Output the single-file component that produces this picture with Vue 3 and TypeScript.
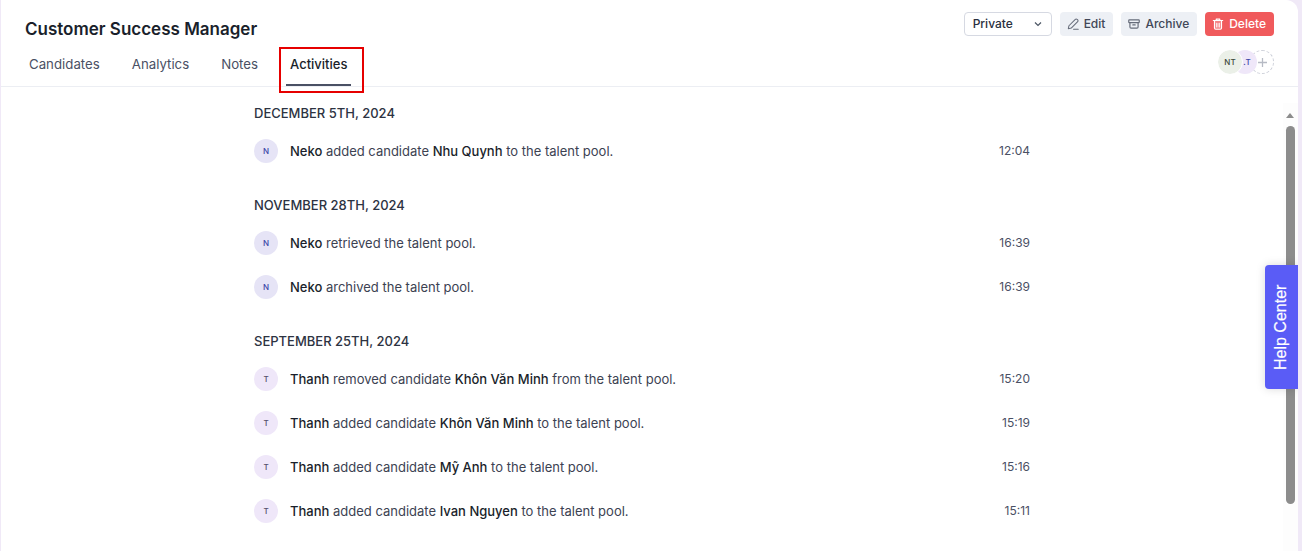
<template>
  <div class="page">
    <div class="panel">
      <header class="head">
        <div class="head__top">
          <h1 class="head__title">Customer Success Manager</h1>
          <div class="head__actions">
            <div class="select">
              <span>Private</span>
              <svg width="10" height="10" viewBox="0 0 10 10" fill="none" stroke="#4b5563" stroke-width="1.2"><path d="M2 3.5 5 6.5 8 3.5" /></svg>
            </div>
            <button class="btn">
              <svg class="btn__icon" width="14" height="14" viewBox="0 0 24 24" fill="none" stroke="currentColor" stroke-width="1.8" stroke-linecap="round" stroke-linejoin="round"><path d="M4 20l1-5L16 4a2.1 2.1 0 0 1 3 0l1 1a2.1 2.1 0 0 1 0 3L9 19z" /><path d="M13 21h8" /></svg>
              <span>Edit</span>
            </button>
            <button class="btn">
              <svg class="btn__icon" width="14" height="14" viewBox="0 0 24 24" fill="none" stroke="currentColor" stroke-width="2" stroke-linecap="round" stroke-linejoin="round"><rect x="3" y="5" width="18" height="4.5" rx="1" /><path d="M5 9.5V17a2 2 0 0 0 2 2h10a2 2 0 0 0 2-2V9.5" /><path d="M10 13.5h4" /></svg>
              <span>Archive</span>
            </button>
            <button class="btn btn--danger">
              <svg width="14" height="14" viewBox="0 0 24 24" fill="none" stroke="currentColor" stroke-width="2" stroke-linecap="round" stroke-linejoin="round"><path d="M4 6h16" /><path d="M9 6V3.5h6V6" /><path d="M6 6v13a2 2 0 0 0 2 2h8a2 2 0 0 0 2-2V6" fill="currentColor" fill-opacity=".25" /><path d="M10 11v6M14 11v6" /></svg>
              <span>Delete</span>
            </button>
          </div>
        </div>
        <div class="head__bottom">
          <nav class="tabs">
            <a v-for="t in tabs" :key="t" class="tab" :class="{ 'tab--on': t === 'Activities' }">{{ t }}</a>
          </nav>
          <div class="members">
            <span class="member member--green">NT</span>
            <span class="member member--purple">.T</span>
            <span class="member member--add">
              <svg width="9" height="9" viewBox="0 0 10 10" stroke="#b6bac4" stroke-width="1.4"><path d="M5 0v10M0 5h10" /></svg>
            </span>
          </div>
        </div>
      </header>

      <div class="body">
        <main class="feed">
          <section v-for="g in groups" :key="g.date" class="group">
            <h2 class="group__date">{{ g.date }}</h2>
            <div v-for="(r, i) in g.rows" :key="i" class="row">
              <span class="avatar" :class="r.who === 'Neko' ? 'avatar--n' : 'avatar--t'">{{ r.who[0] }}</span>
              <p class="row__text">
                <b>{{ r.who }}</b> {{ r.verb }}
                <template v-if="r.name"><b>{{ r.name }}</b> {{ r.tail }}</template>
              </p>
              <span class="row__time">{{ r.time }}</span>
            </div>
          </section>
        </main>
        <div class="scroll">
          <span class="scroll__arrow"></span>
          <span class="scroll__thumb"></span>
        </div>
      </div>

      <div class="help">Help Center</div>
    </div>
  </div>
</template>

<script setup lang="ts">
interface Row {
  who: string
  verb: string
  name?: string
  tail?: string
  time: string
}

const tabs = ['Candidates', 'Analytics', 'Notes', 'Activities']

const groups: { date: string; rows: Row[] }[] = [
  {
    date: 'DECEMBER 5TH, 2024',
    rows: [{ who: 'Neko', verb: 'added candidate', name: 'Nhu Quynh', tail: 'to the talent pool.', time: '12:04' }]
  },
  {
    date: 'NOVEMBER 28TH, 2024',
    rows: [
      { who: 'Neko', verb: 'retrieved the talent pool.', time: '16:39' },
      { who: 'Neko', verb: 'archived the talent pool.', time: '16:39' }
    ]
  },
  {
    date: 'SEPTEMBER 25TH, 2024',
    rows: [
      { who: 'Thanh', verb: 'removed candidate', name: 'Khôn Văn Minh', tail: 'from the talent pool.', time: '15:20' },
      { who: 'Thanh', verb: 'added candidate', name: 'Khôn Văn Minh', tail: 'to the talent pool.', time: '15:19' },
      { who: 'Thanh', verb: 'added candidate', name: 'Mỹ Anh', tail: 'to the talent pool.', time: '15:16' },
      { who: 'Thanh', verb: 'added candidate', name: 'Ivan Nguyen', tail: 'to the talent pool.', time: '15:11' }
    ]
  }
]
</script>

<style>
html, body { margin: 0; height: 100%; overflow: hidden; background: #f0e9f7; }
</style>

<style scoped>
.page { height: 551px; padding: 0 4px 0 1px; box-sizing: border-box; font-family: Inter, "Liberation Sans", sans-serif; color: #1f2430; }
.panel { position: relative; height: 100%; background: #fff; border-top-right-radius: 12px; overflow: hidden; display: flex; flex-direction: column; }

.head { padding: 12px 24px 0 24px; border-bottom: 1px solid #eceef3; height: 74px; flex: none; box-sizing: content-box; }
.head__top { display: flex; justify-content: space-between; align-items: flex-start; height: 24px; }
.head__title { margin: 6px 0 0; font-size: 17px; line-height: 22px; font-weight: 600; color: #1a1f2b; }
.head__actions { display: flex; align-items: center; gap: 8px; }
.select { width: 88px; height: 24px; box-sizing: border-box; border: 1px solid #d6d9e2; border-radius: 4px; display: flex; align-items: center; justify-content: space-between; padding: 0 8px 1px; font-size: 12px; font-weight: 500; color: #2a3040; }
.btn { height: 24px; border: 0; border-radius: 4px; background: #edf0f5; color: #414757; display: flex; align-items: center; gap: 4px; padding: 0 8px 0 6px; font: 500 12px Inter, "Liberation Sans", sans-serif; }
.btn span { margin-bottom: 1px; }
.btn__icon { color: #666c7a; }
.btn--danger { background: #f05a5c; color: #fff; }

.head__bottom { display: flex; justify-content: space-between; align-items: flex-start; margin-top: 4px; }
.tabs { display: flex; }
.tab { display: block; padding: 16px 4px 14px; margin-right: 24px; font-size: 13.25px; line-height: 16px; color: #4a5064; }
.tab--on { color: #1a1f2b; font-weight: 500; font-size: 13px; position: relative; }
.tab--on::after { content: ""; position: absolute; left: 0; right: 0; bottom: 0; height: 2px; background: #4a5064; }
.tab--on::before { content: ""; position: absolute; left: -7px; right: -13px; top: 7px; bottom: -7px; border: 2px solid #e60000; }

.members { display: flex; margin-top: 10px; }
.member { width: 24px; height: 24px; border-radius: 50%; display: flex; align-items: center; justify-content: center; font-size: 8px; font-weight: 500; box-sizing: border-box; }
.member--green { background: #ebf0e8; color: #3d4a3a; z-index: 3; outline: 1px solid #fff; }
.member--purple { background: #efe7f9; color: #3b47a8; margin-left: -9px; z-index: 2; padding-left: 4px; }
.member--add { margin-left: -7px; border: 1px dashed #ced1da; z-index: 1; }

.body { flex: 1; display: flex; min-height: 0; position: relative; }
.feed { flex: 1; padding: 16px 0 0 253px; }
.group { width: 776px; margin-bottom: 22px; }
.group__date { margin: 0 0 6px; font-size: 13px; line-height: 20px; font-weight: 500; color: #2d3342; }
.row { display: flex; align-items: center; height: 44px; }
.avatar { width: 24px; height: 24px; border-radius: 50%; flex: none; display: flex; align-items: center; justify-content: center; font-size: 8px; font-weight: 500; margin-right: 12px; }
.avatar--n { background: #e6e4f6; color: #3b47a8; }
.avatar--t { background: #efe7f9; color: #55506b; }
.row__text { flex: 1; margin: 0; font-size: 13px; line-height: 20px; color: #3c4252; }
.row__text b { font-weight: 500; color: #1a1f2b; }
.row__time { font-size: 12px; color: #4a5064; margin-bottom: 1px; }

.scroll { position: absolute; top: 16px; right: 0; bottom: 0; width: 15px; background: #fdfdfd; }
.scroll__arrow { display: block; width: 0; margin: 10px 0 0 3px; border: 4px solid transparent; border-top: 0; border-bottom: 5px solid #8c8c8c; }
.scroll__thumb { position: absolute; top: 23px; left: 3px; width: 9px; height: 378px; background: #8c8c8c; border-radius: 5px; }

.help { position: absolute; right: 0; top: 265px; width: 33px; height: 124px; box-sizing: border-box; padding-left: 2px; background: #5a5cf6; color: #fff; box-shadow: 0 0 10px rgba(0,0,0,.15); display: flex; align-items: center; justify-content: center; writing-mode: vertical-rl; transform: rotate(180deg); border-radius: 0 4px 4px 0; -webkit-text-stroke: .2px #fff; font: 500 16px "Liberation Sans", Arial, sans-serif; }
</style>
